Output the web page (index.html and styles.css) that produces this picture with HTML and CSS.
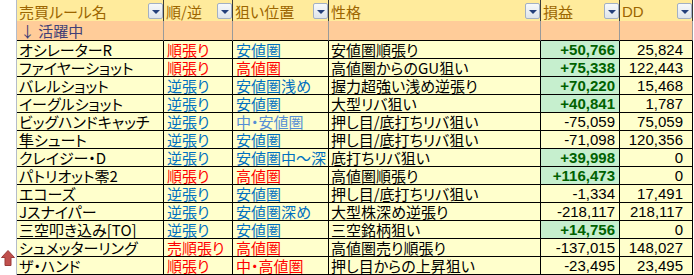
FILE: index.html
```html
<!DOCTYPE html>
<html lang="ja">
<head>
<meta charset="utf-8">
<title>売買ルール</title>
<link rel="stylesheet" href="styles.css">
</head>
<body>
<div class="sheet">
  <div class="grid">
    <div class="hd">売買ルール名<span class="dd"></span></div>
    <div class="hd">順/逆<span class="dd"></span></div>
    <div class="hd">狙い位置<span class="dd"></span></div>
    <div class="hd">性格<span class="dd"></span></div>
    <div class="hd">損益<span class="dd"></span></div>
    <div class="hd hd-latin">DD<span class="dd"></span></div>

    <div class="sec">↓ 活躍中</div><div class="sec"></div><div class="sec"></div><div class="sec"></div><div class="sec"></div><div class="sec"></div>

    <div class="c">オシレーターR</div><div class="c red">順張り</div><div class="c blue">安値圏</div><div class="c">安値圏順張り</div><div class="c num good">+50,766</div><div class="c num dd-col">25,824</div>
    <div class="c">ファイヤーショット</div><div class="c red">順張り</div><div class="c red">高値圏</div><div class="c">高値圏からのGU狙い</div><div class="c num good">+75,338</div><div class="c num dd-col">122,443</div>
    <div class="c">バレルショット</div><div class="c blue">逆張り</div><div class="c blue">安値圏浅め</div><div class="c">握力超強い浅め逆張り</div><div class="c num good">+70,220</div><div class="c num dd-col">15,468</div>
    <div class="c">イーグルショット</div><div class="c blue">逆張り</div><div class="c blue">安値圏</div><div class="c">大型リバ狙い</div><div class="c num good">+40,841</div><div class="c num dd-col">1,787</div>
    <div class="c">ビッグハンドキャッチ</div><div class="c blue">逆張り</div><div class="c lblue">中・安値圏</div><div class="c">押し目/底打ちリバ狙い</div><div class="c num">-75,059</div><div class="c num dd-col">75,059</div>
    <div class="c">隼シュート</div><div class="c blue">逆張り</div><div class="c blue">安値圏</div><div class="c">押し目/底打ちリバ狙い</div><div class="c num">-71,098</div><div class="c num dd-col">120,356</div>
    <div class="c">クレイジー・D</div><div class="c blue">逆張り</div><div class="c blue">安値圏中～深</div><div class="c">底打ちリバ狙い</div><div class="c num good">+39,998</div><div class="c num dd-col">0</div>
    <div class="c">パトリオット零2</div><div class="c red">順張り</div><div class="c red">高値圏</div><div class="c">高値圏順張り</div><div class="c num good">+116,473</div><div class="c num dd-col">0</div>
    <div class="c">エコーズ</div><div class="c blue">逆張り</div><div class="c blue">安値圏</div><div class="c">押し目/底打ちリバ狙い</div><div class="c num">-1,334</div><div class="c num dd-col">17,491</div>
    <div class="c">Jスナイパー</div><div class="c blue">逆張り</div><div class="c blue">安値圏深め</div><div class="c">大型株深め逆張り</div><div class="c num">-218,117</div><div class="c num dd-col">218,117</div>
    <div class="c">三空叩き込み[TO]</div><div class="c blue">逆張り</div><div class="c blue">安値圏</div><div class="c">三空銘柄狙い</div><div class="c num good">+14,756</div><div class="c num dd-col">0</div>
    <div class="c">シュメッターリング</div><div class="c red">売順張り</div><div class="c red">高値圏</div><div class="c">高値圏売り順張り</div><div class="c num">-137,015</div><div class="c num dd-col">148,027</div>
    <div class="c">ザ・ハンド</div><div class="c red">順張り</div><div class="c red">中・高値圏</div><div class="c">押し目からの上昇狙い</div><div class="c num">-23,495</div><div class="c num dd-col">23,495</div>
  </div>
  <svg class="up-arrow" width="14" height="16" viewBox="0 0 14 16">
    <path d="M7 0.5 L13.5 7.5 L10 7.5 L10 15.5 L4 15.5 L4 7.5 L0.5 7.5 Z" fill="#c0504d" stroke="#9b3b39" stroke-width="1"/>
  </svg>
</div>
</body>
</html>
```

FILE: styles.css
```css
html, body {
  margin: 0;
  padding: 0;
  background: #ffffff;
}

.sheet {
  position: relative;
  width: 694px;
  height: 275px;
  overflow: hidden;
  font-family: "Noto Sans CJK JP", "Noto Sans", sans-serif;
}

.grid {
  margin-left: 16px;
  display: grid;
  grid-template-columns: 147px 69px 96px 212px 79px 73px;
  grid-auto-rows: 18px;
  grid-template-rows: 21px 20px;
  border-left: 1px solid #b4bccb;
  width: 677px;
  box-sizing: border-box;
}

.hd {
  box-sizing: border-box;
  display: flex;
  background: #ffeb9c;
  color: #9c6500;
  font-size: 15px;
  line-height: 17px;
  padding: 3px 0 0 2px;
  border-right: 1px solid #3a3a3a;
  white-space: nowrap;
  font-feature-settings: "palt";
}

.hd-latin {
  font-family: "Liberation Sans", sans-serif;
  font-size: 15px;
}

.dd {
  margin-left: auto;
  width: 15px;
  height: 16px;
  box-sizing: border-box;
  border: 1px solid #a3b0c4;
  border-radius: 2px;
  background: linear-gradient(#f7f9fb, #dfe4ea);
  position: relative;
  flex: none;
}

.dd::after {
  content: "";
  position: absolute;
  left: 3px;
  top: 6px;
  border-left: 4px solid transparent;
  border-right: 4px solid transparent;
  border-top: 4px solid #25407a;
}

.sec {
  box-sizing: border-box;
  background: #ffcc99;
  color: #3f3f76;
  font-size: 15px;
  line-height: 19px;
  padding-left: 3px;
  border-right: 1px solid #9a9a9a;
  border-bottom: 1px solid #000;
  white-space: nowrap;
}

.c {
  box-sizing: border-box;
  background: #ffffcc;
  color: #000;
  font-size: 15px;
  line-height: 17px;
  padding-left: 2px;
  border-right: 1px solid #000;
  border-bottom: 1px solid #000;
  white-space: nowrap;
  font-feature-settings: "palt";
}

.red { color: #ff0000; padding-left: 3px; }
.blue { color: #0070c0; padding-left: 3px; }
.lblue { color: #558ed5; padding-left: 3px; }

.num {
  font-family: "Liberation Sans", sans-serif;
  font-size: 15px;
  text-align: right;
  padding-right: 4px;
  font-feature-settings: normal;
}

.dd-col {
  padding-right: 9px;
}

.good {
  background: #c6efce;
  color: #006100;
  font-weight: bold;
}

.up-arrow {
  position: absolute;
  left: 1px;
  top: 250px;
}
```
